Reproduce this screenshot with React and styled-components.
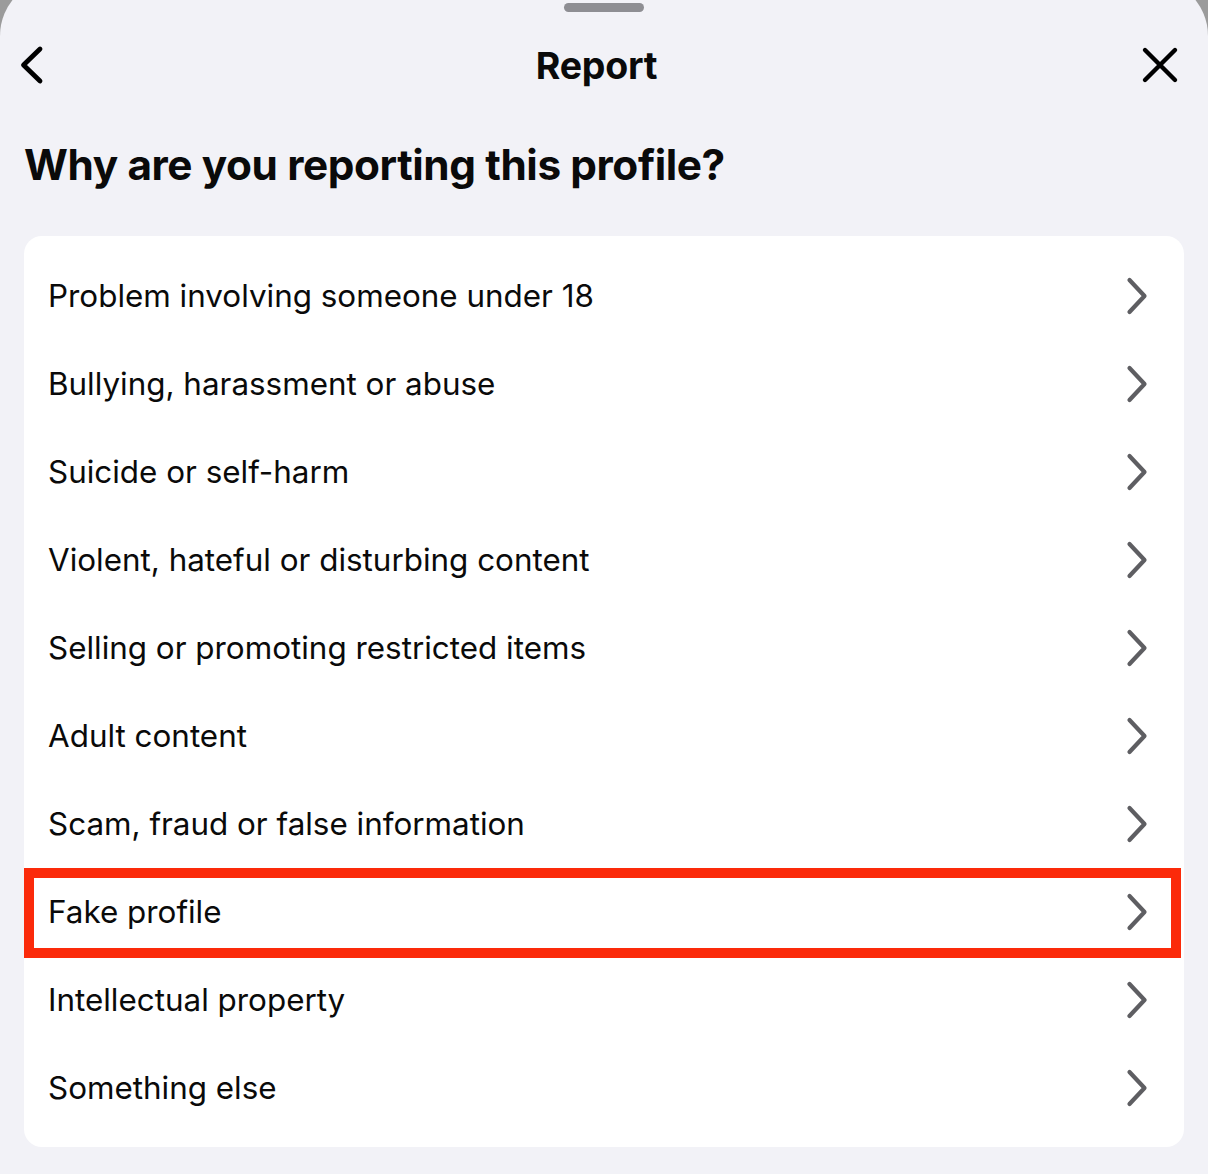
import React from "react";
import styled, { createGlobalStyle } from "styled-components";

const Global = createGlobalStyle`
  html, body { margin: 0; padding: 0; background: #9b9b9b; }
  body { font-family: Inter, "Noto Sans", "Liberation Sans", sans-serif; -webkit-font-smoothing: antialiased; }
  #root { min-height: 1174px; overflow: hidden; }
`;

const Sheet = styled.div`
  margin-top: -22px;
  min-height: 1196px;
  background: #f2f2f7;
  border-radius: 58px 58px 0 0;
  padding: 25px 24px 0;
  box-sizing: border-box;
`;

const Handle = styled.div`
  width: 80px;
  height: 9px;
  border-radius: 5px;
  background: #8e8e93;
  margin: 0 auto;
`;

const Header = styled.div`
  height: 106px;
  display: grid;
  grid-template-columns: 80px 1fr 80px;
  align-items: center;
  margin: 0 -24px;
  padding: 0 22px;
`;

const IconButton = styled.button`
  background: none;
  border: 0;
  padding: 0;
  display: flex;
  justify-content: ${(p) => (p.$end ? "flex-end" : "flex-start")};
  color: #000;
  cursor: pointer;
  margin-right: ${(p) => (p.$end ? "7px" : "0")};
  margin-left: ${(p) => (p.$end ? "0" : "-2px")};
`;

const Title = styled.h1`
  margin: 0;
  padding-right: 15px;
  text-align: center;
  font-size: 37.5px;
  font-weight: 700;
  color: #0a0a0a;
  letter-spacing: -0.2px;
`;

const Heading = styled.h2`
  margin: 21px 0 0 0;
  font-size: 42.3px;
  line-height: 52px;
  font-weight: 700;
  color: #0a0a0a;
  letter-spacing: -0.4px;
`;

const Card = styled.div`
  margin-top: 45px;
  background: #fff;
  border-radius: 18px;
  padding: 16px 0 15px;
`;

const Row = styled.div`
  position: relative;
  height: 88px;
  display: flex;
  align-items: center;
  justify-content: space-between;
  padding: 0 36px 0 24px;
`;

const Label = styled.span`
  font-size: 31.4px;
  font-weight: 400;
  color: #0a0a0a;
`;

const Highlight = styled.div`
  position: absolute;
  left: 0;
  right: 3px;
  top: 0;
  bottom: -2px;
  border: 10px solid #fb2a0a;
  pointer-events: none;
`;

const Chevron = () => (
  <svg width="22" height="38" viewBox="0 0 22 38" fill="none">
    <polyline
      points="3.5,3 18.5,19 3.5,35"
      stroke="#5e5e62"
      strokeWidth="4.2"
      strokeLinecap="round"
      strokeLinejoin="round"
    />
  </svg>
);

const BackIcon = () => (
  <svg width="24" height="40" viewBox="0 0 24 40" fill="none">
    <polyline
      points="20,4 3.5,20 20,36"
      stroke="#000"
      strokeWidth="4.8"
      strokeLinecap="round"
      strokeLinejoin="round"
    />
  </svg>
);

const CloseIcon = () => (
  <svg width="38" height="38" viewBox="0 0 38 38" fill="none">
    <path d="M4 4L34 34M34 4L4 34" stroke="#000" strokeWidth="4.4" strokeLinecap="round" />
  </svg>
);

const items = [
  "Problem involving someone under 18",
  "Bullying, harassment or abuse",
  "Suicide or self-harm",
  "Violent, hateful or disturbing content",
  "Selling or promoting restricted items",
  "Adult content",
  "Scam, fraud or false information",
  "Fake profile",
  "Intellectual property",
  "Something else",
];

export default function App() {
  return (
    <>
      <Global />
      <Sheet>
        <Handle />
        <Header>
          <IconButton aria-label="Back">
            <BackIcon />
          </IconButton>
          <Title>Report</Title>
          <IconButton $end aria-label="Close">
            <CloseIcon />
          </IconButton>
        </Header>
        <Heading>Why are you reporting this profile?</Heading>
        <Card>
          {items.map((t) => (
            <Row key={t}>
              <Label>{t}</Label>
              <Chevron />
              {t === "Fake profile" && <Highlight />}
            </Row>
          ))}
        </Card>
      </Sheet>
    </>
  );
}
